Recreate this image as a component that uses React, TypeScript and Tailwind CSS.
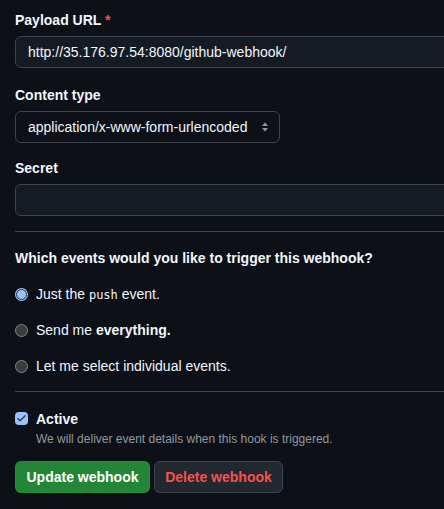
import { Check } from "lucide-react";

const font = { fontFamily: '"Liberation Sans", Arial, sans-serif' };

export default function App() {
  return (
    <div className="w-[444px] h-[509px] overflow-hidden bg-[#0d1117] text-[#f0f6fc] text-sm pl-[15px] pt-[10px]" style={font}>
      <div className="w-[460px]">
        <label className="block font-semibold leading-5">
          Payload URL <span className="text-[#f85149]">*</span>
        </label>
        <div className="mt-[6px] h-8 rounded-md border border-[#3d444d] bg-[#151b23] flex items-center px-3 leading-5">
          http://35.176.97.54:8080/github-webhook/
        </div>

        <label className="block font-semibold leading-5 mt-[17px]">Content type</label>
        <div className="mt-[6px] h-8 w-[265px] rounded-md border border-[#3d444d] bg-[#0d1117] flex items-center justify-between pl-3 pr-[6px] whitespace-nowrap">
          <span>application/x-www-form-urlencoded</span>
          <svg width="16" height="16" viewBox="0 0 16 16" fill="#9198a1">
            <path d="M8 3.5 11 7H5z" />
            <path d="M8 12.5 5 9h6z" />
          </svg>
        </div>

        <label className="block font-semibold leading-5 mt-[15px]">Secret</label>
        <div className="mt-[6px] h-8 rounded-md border border-[#3d444d] bg-[#151b23]" />

        <div className="mt-[15px] border-t border-[#3d444d]" />

        <h3 className="font-semibold leading-5 mt-[16px]">Which events would you like to trigger this webhook?</h3>

        <div className="mt-[16px] flex flex-col gap-4">
          <label className="flex items-center gap-2 leading-5">
            <span className="w-[13px] h-[13px] rounded-full bg-[#a8c7fa] p-px flex">
              <span className="flex-1 rounded-full bg-[#99c3ff] border border-[#23324a]" />
            </span>
            <span>
              Just the <code className="text-xs" style={{ fontFamily: '"DejaVu Sans Mono", monospace' }}>push</code> event.
            </span>
          </label>
          <label className="flex items-center gap-2 leading-5">
            <span className="w-[13px] h-[13px] rounded-full bg-[#3b3b3b] border border-[#858585]" />
            <span>
              Send me <strong className="font-semibold">everything.</strong>
            </span>
          </label>
          <label className="flex items-center gap-2 leading-5">
            <span className="w-[13px] h-[13px] rounded-full bg-[#3b3b3b] border border-[#858585]" />
            <span>Let me select individual events.</span>
          </label>
        </div>

        <div className="mt-[15px] border-t border-[#3d444d]" />

        <div className="mt-[17px] flex items-start gap-2">
          <span className="mt-[3px] w-[13px] h-[13px] rounded-sm bg-[#99c3ff] flex items-center justify-center">
            <Check size={11} strokeWidth={3} color="#3b3b3b" />
          </span>
          <div>
            <div className="font-semibold leading-5">Active</div>
            <div className="text-xs text-[#9198a1] leading-5">We will deliver event details when this hook is triggered.</div>
          </div>
        </div>

        <div className="mt-[12px] flex gap-1">
          <button className="h-8 w-[135px] rounded-md bg-[#238636] border border-[#2ea043]/40 font-semibold text-white">
            Update webhook
          </button>
          <button className="h-8 w-[129px] rounded-md bg-[#212830] border border-[#3d444d] font-semibold text-[#f85149]">
            Delete webhook
          </button>
        </div>
      </div>
    </div>
  );
}
